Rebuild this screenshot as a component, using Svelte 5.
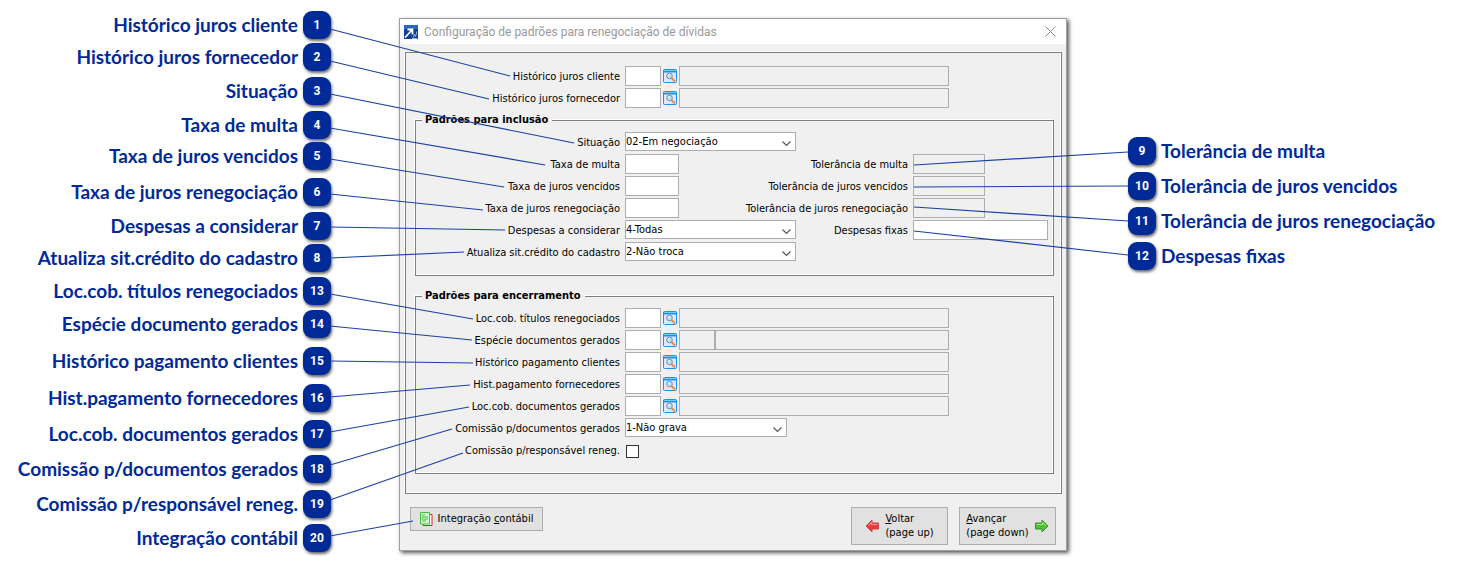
<script>
  const left = [
    { n: 1, text: 'Histórico juros cliente', y: 25, from: 29, to: [510, 76] },
    { n: 2, text: 'Histórico juros fornecedor', y: 57, from: 61, to: [489, 99] },
    { n: 3, text: 'Situação', y: 91, from: 94, to: [574, 143] },
    { n: 4, text: 'Taxa de multa', y: 125, from: 128, to: [545, 165] },
    { n: 5, text: 'Taxa de juros vencidos', y: 156, from: 159, to: [504, 187] },
    { n: 6, text: 'Taxa de juros renegociação', y: 192, from: 194, to: [483, 210] },
    { n: 7, text: 'Despesas a considerar', y: 226, from: 227, to: [505, 230] },
    { n: 8, text: 'Atualiza sit.crédito do cadastro', y: 258, from: 258, to: [464, 252] },
    { n: 13, text: 'Loc.cob. títulos renegociados', y: 291, from: 294, to: [473, 319] },
    { n: 14, text: 'Espécie documento gerados', y: 324, from: 326, to: [472, 340] },
    { n: 15, text: 'Histórico pagamento clientes', y: 361, from: 361, to: [473, 363] },
    { n: 16, text: 'Hist.pagamento fornecedores', y: 398, from: 397, to: [470, 385] },
    { n: 17, text: 'Loc.cob. documentos gerados', y: 434, from: 432, to: [469, 407] },
    { n: 18, text: 'Comissão p/documentos gerados', y: 469, from: 465, to: [452, 429] },
    { n: 19, text: 'Comissão p/responsável reneg.', y: 504, from: 500, to: [463, 453] },
    { n: 20, text: 'Integração contábil', y: 538, from: 536, to: [413, 521] }
  ];

  const right = [
    { n: 9, text: 'Tolerância de multa', y: 151, from: 165, to: 152 },
    { n: 10, text: 'Tolerância de juros vencidos', y: 186, from: 187, to: 186 },
    { n: 11, text: 'Tolerância de juros renegociação', y: 221, from: 207, to: 221 },
    { n: 12, text: 'Despesas fixas', y: 256, from: 231, to: 255 }
  ];

  const closing = [
    { id: 'titulos', label: 'Loc.cob. títulos renegociados' },
    { id: 'especie', label: 'Espécie documentos gerados', split: true },
    { id: 'histcli', label: 'Histórico pagamento clientes' },
    { id: 'histfor', label: 'Hist.pagamento fornecedores' },
    { id: 'docs', label: 'Loc.cob. documentos gerados' }
  ];
</script>

{#snippet lookup(id, label, split)}
  <label for={id}>{label}</label>
  <div class="lookup">
    <input id={id} class="code" type="text" />
    <button class="search" type="button" aria-label="Pesquisar {label}">
      <svg width="14" height="14" viewBox="0 0 14 14">
        <rect x="0.5" y="0.5" width="13" height="13" rx="1" fill="#e3e6fa" stroke="#1593f5" />
        <path d="M0 1h14v2.5H0z" fill="#1593f5" />
        <path d="M1 1.5h12" stroke="#7cc8ff" />
        <path d="M8.5 9l3.5 3.5" stroke="#ea8a3c" stroke-width="2" />
        <circle cx="6.5" cy="7" r="2.8" fill="#b4e6fb" stroke="#7b8ba0" />
        <path d="M5 6.5l1.5-1.3" stroke="#fff" />
      </svg>
    </button>
    {#if split}
      <input class="short" type="text" readonly aria-label="Código {label}" />
      <input class="rest" type="text" readonly aria-label="Descrição {label}" />
    {:else}
      <input class="desc" type="text" readonly aria-label="Descrição {label}" />
    {/if}
  </div>
{/snippet}

{#snippet combo(id, value, narrow)}
  <div class="combo" class:narrow>
    <select {id}><option>{value}</option></select>
    <svg width="9" height="6" viewBox="0 0 9 6"><path d="M0.5 0.5l4 4 4-4" fill="none" stroke="#555" stroke-width="1.2" /></svg>
  </div>
{/snippet}

<main>
  <ol class="callouts left">
    {#each left as c}
      <li style="top: {c.y}px"><span>{c.text}</span><b>{c.n}</b></li>
    {/each}
  </ol>

  <section class="window">
    <header>
      <svg width="14" height="14" viewBox="0 0 14 14">
        <rect width="14" height="14" fill="#0d3f94" />
        <path d="M0 0h14v4H0z" fill="#2a68bd" />
        <path d="M1 12.5l6.5-7M3.5 4.5h5v5" fill="none" stroke="#fff" stroke-width="1.8" />
        <path d="M9 12.5l1.5-3 1 2 1.5-5M8 13.5h5" fill="none" stroke="#8fc0f2" />
      </svg>
      <h1>Configuração de padrões para renegociação de dívidas</h1>
      <button class="close" type="button" aria-label="Fechar">
        <svg width="11" height="11" viewBox="0 0 11 11"><path d="M0.5 0.5l10 10M10.5 0.5l-10 10" stroke="#8a8a8a" /></svg>
      </button>
    </header>

    <form>
      <div class="panel">
        <div class="grid top">
          {@render lookup('cliente', 'Histórico juros cliente', false)}
          {@render lookup('fornecedor', 'Histórico juros fornecedor', false)}
        </div>

        <fieldset>
          <legend>Padrões para inclusão</legend>
          <div class="grid wide">
            <label for="situacao">Situação</label>
            {@render combo('situacao', '02-Em negociação', false)}
            <span></span><span></span>

            <label for="multa">Taxa de multa</label>
            <input id="multa" class="rate" type="text" />
            <label for="tolmulta">Tolerância de multa</label>
            <input id="tolmulta" class="tolerance" type="text" readonly />

            <label for="juros">Taxa de juros vencidos</label>
            <input id="juros" class="rate" type="text" />
            <label for="toljuros">Tolerância de juros vencidos</label>
            <input id="toljuros" class="tolerance" type="text" readonly />

            <label for="reneg">Taxa de juros renegociação</label>
            <input id="reneg" class="rate" type="text" />
            <label for="tolreneg">Tolerância de juros renegociação</label>
            <input id="tolreneg" class="tolerance" type="text" readonly />

            <label for="despesas">Despesas a considerar</label>
            {@render combo('despesas', '4-Todas', false)}
            <label for="fixas">Despesas fixas</label>
            <input id="fixas" type="text" />

            <label for="atualiza">Atualiza sit.crédito do cadastro</label>
            {@render combo('atualiza', '2-Não troca', false)}
          </div>
        </fieldset>

        <fieldset>
          <legend>Padrões para encerramento</legend>
          <div class="grid">
            {#each closing as f}
              {@render lookup(f.id, f.label, f.split)}
            {/each}
            <label for="comissao">Comissão p/documentos gerados</label>
            {@render combo('comissao', '1-Não grava', true)}
            <label for="responsavel">Comissão p/responsável reneg.</label>
            <input id="responsavel" type="checkbox" />
          </div>
        </fieldset>
      </div>

      <footer>
        <button class="btn account" type="button">
          <svg width="13" height="14" viewBox="0 0 13 14">
            <path d="M3 2.5h9v11H3z" fill="#fff" stroke="#d8232a" />
            <path d="M0.5 0.5h9v11.5h-9z" fill="#d6f8d3" stroke="#3ec23a" />
            <path d="M2 3h3M2 5h6M2 7h6M2 9h4" stroke="#3ec23a" />
          </svg>
          <span>Integração <u>c</u>ontábil</span>
        </button>
        <button class="btn nav" type="button">
          <svg width="15" height="14" viewBox="0 0 15 14">
            <path d="M1 7L7 1v3h6.5v6H7v3z" fill="#f2383c" stroke="#c8474a" />
            <path d="M3 6.5l3.5-3v2h6" fill="none" stroke="#ff9a9a" />
          </svg>
          <span><u>V</u>oltar<br />(page up)</span>
        </button>
        <button class="btn nav" type="button">
          <span><u>A</u>vançar<br />(page down)</span>
          <svg width="15" height="14" viewBox="0 0 15 14">
            <path d="M14 7L8 1v3H1.5v6H8v3z" fill="#4cc22c" stroke="#3f8a2e" />
            <path d="M2.5 5.5h6v-2l3.5 3" fill="none" stroke="#a5ec8e" />
          </svg>
        </button>
      </footer>
    </form>
  </section>

  <ol class="callouts right">
    {#each right as c}
      <li style="top: {c.y}px"><b>{c.n}</b><span>{c.text}</span></li>
    {/each}
  </ol>

  <svg class="lines from-left" width="600" height="567" viewBox="0 0 600 567">
    {#each left as c}
      <line x1="330" y1={c.from} x2={c.to[0]} y2={c.to[1]} />
    {/each}
  </svg>
  <svg class="lines from-right" viewBox="0 0 214 567" preserveAspectRatio="none">
    {#each right as c}
      <line x1="0" y1={c.from} x2="214" y2={c.to} />
    {/each}
  </svg>
</main>

<style>
:global(body) {
  background: #fff;
}

main {
  position: relative;
  display: grid;
  grid-template-columns: 399px minmax(668px, 1fr) 391px;
  padding: 18px 0 16px;
  color: #000;
  font-family: "DejaVu Sans Condensed", "DejaVu Sans", sans-serif;
  font-size: 11px;
  line-height: 14px;
}

/* callouts */
.callouts {
  position: relative;
  margin: -18px 0 0;
  padding: 0;
  list-style: none;
  color: #002a98;
  font: bold 19px/28px Lato, sans-serif;
}

.callouts li {
  position: absolute;
  display: flex;
  gap: 5px;
  margin-top: -14px;
  white-space: nowrap;
}

.left li {
  right: 68px;
}

.right li {
  left: 61px;
}

.callouts b {
  width: 28px;
  height: 28px;
  border-radius: 9px;
  background: #002a98;
  box-shadow: 1px 2px 3px #0009;
  color: #fff;
  font: bold 12px/28px Roboto, sans-serif;
  text-align: center;
}

.lines {
  position: absolute;
  top: 0;
  pointer-events: none;
}

.lines line {
  stroke: #1c41a3;
  stroke-width: 1.2;
  vector-effect: non-scaling-stroke;
}

.from-left {
  left: 0;
}

.from-right {
  left: 914px;
  width: calc(100% - 1244px);
  height: 567px;
}

/* dialog */
.window {
  border: 1px solid #a0a0a0;
  background: #f0f0f0;
  box-shadow: 2px 2px 4px #000a;
}

header {
  display: flex;
  align-items: center;
  gap: 6px;
  height: 25px;
  padding: 0 10px 0 4px;
  background: #fff;
}

h1 {
  flex: 1;
  margin: 0;
  color: #999;
  font: 12px/14px Roboto, sans-serif;
}

.close, .search {
  display: flex;
  padding: 0;
  border: none;
  background: none;
}

.panel {
  margin: 8px 4px 0 5px;
  padding: 13px 7px 19px 9px;
  border: 1px solid #808080;
  box-shadow: -1px -1px 0 #fff, inset -1px -1px 0 #fff;
}

fieldset {
  min-width: 0;
  margin: 13px 0 0;
  padding: 5px 0 11px;
  border: 1px solid #808080;
  box-shadow: -1px -1px 0 #fff, inset -1px -1px 0 #fff;
}

.top + fieldset {
  margin-top: 3px;
}

legend {
  margin-left: 6px;
  padding: 0 4px 0 3px;
  background: #f0f0f0;
  font-weight: bold;
}

.grid {
  display: grid;
  grid-template-columns: 204px 1fr;
  grid-auto-rows: 22px;
  column-gap: 5px;
}

.grid.top {
  padding-left: 1px;
}

.grid.wide {
  grid-template-columns: 204px 171px 107px 135px;
}

label {
  justify-self: end;
  line-height: 22px;
  white-space: nowrap;
}

input, select {
  box-sizing: border-box;
  height: 20px;
  margin: 0;
  padding: 0 1px;
  border: 1px solid #abadb3;
  border-radius: 0;
  background: #fff;
  color: #000;
  font: inherit;
}

input[readonly] {
  background: #f0f0f0;
}

.lookup {
  display: flex;
  align-items: flex-start;
}

.search {
  margin: 3px 2px 0;
}

.code {
  width: 36px;
}

.desc {
  width: 270px;
}

.short {
  width: 36px;
}

.rest {
  width: 234px;
}

.rate {
  width: 54px;
}

.tolerance {
  width: 72px;
}

.combo {
  position: relative;
  width: 171px;
}

.combo.narrow {
  width: 162px;
}

.combo select {
  display: block;
  width: 100%;
  height: 19px;
  padding: 0 20px 0 0;
  appearance: none;
}

.combo svg {
  position: absolute;
  top: 9px;
  right: 5px;
  pointer-events: none;
}

input[type="checkbox"] {
  width: 13px;
  height: 13px;
  margin: 5px 1px;
  border: 1px solid #333;
  appearance: none;
}

input[type="checkbox"]:checked {
  background: #333;
  box-shadow: inset 0 0 0 2px #fff;
}

footer {
  display: flex;
  align-items: flex-start;
  gap: 11px;
  padding: 13px 10px 5px;
}

.btn {
  display: flex;
  align-items: center;
  justify-content: center;
  gap: 5px;
  padding: 0;
  border: 1px solid #adadad;
  background: #e1e1e1;
  color: #000;
  font: inherit;
  text-align: left;
}

.account {
  width: 133px;
  height: 24px;
  margin-right: auto;
}

.nav {
  width: 97px;
  height: 38px;
}
</style>
